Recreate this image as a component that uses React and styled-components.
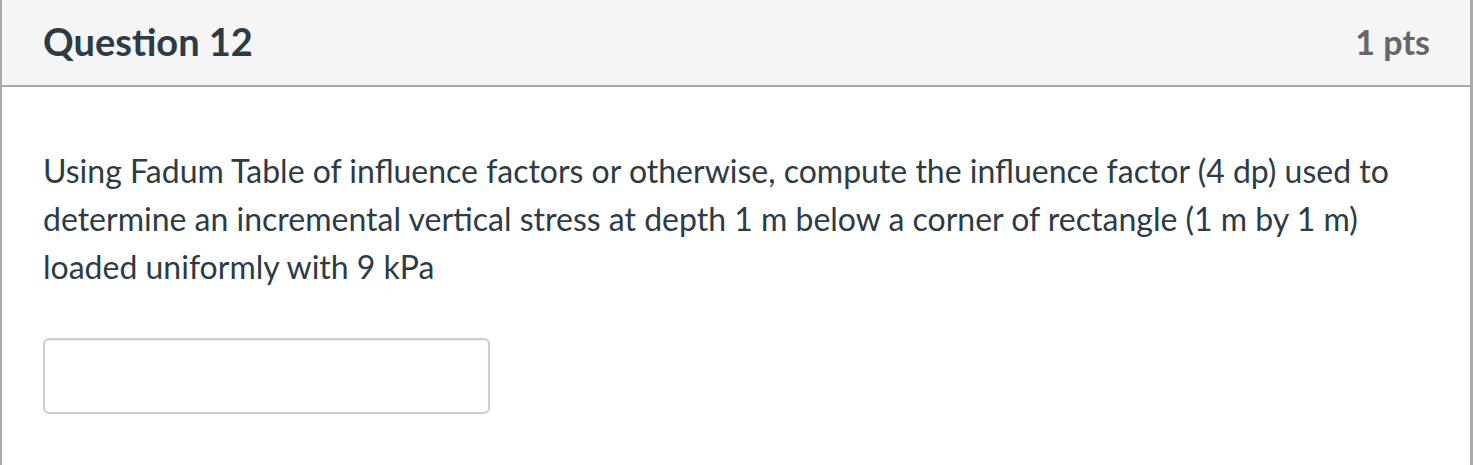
import React from "react";
import styled, { createGlobalStyle } from "styled-components";

const Global = createGlobalStyle`
  html, body { margin: 0; padding: 0; background: #fff; }
  body { font-family: Lato, "Open Sans", sans-serif; }
`;

const Card = styled.div`
  width: 1473px;
  height: 465px;
  box-sizing: border-box;
  border-left: 2px solid #aaaaaa;
  border-right: 3px solid #aaaaaa;
  background: #fff;
  overflow: hidden;
`;

const Header = styled.div`
  display: flex;
  justify-content: space-between;
  align-items: center;
  height: 87px;
  box-sizing: border-box;
  background: #f5f5f5;
  border-bottom: 2px solid #aaaaaa;
  padding: 0 40px 3px 41px;
`;

const Title = styled.h2`
  margin: 0;
  font-size: 38px;
  font-weight: 700;
  color: #2d3b45;
`;

const Points = styled.div`
  font-size: 34px;
  font-weight: 700;
  color: #666666;
`;

const Body = styled.div`
  padding: 60px 41px 0 41px;
`;

const Text = styled.p`
  margin: 0;
  font-size: 32px;
  line-height: 48px;
  color: #2d3b45;
`;

const Answer = styled.input`
  display: block;
  margin-top: 47px;
  width: 447px;
  height: 76px;
  box-sizing: border-box;
  border: 2px solid #cccccc;
  border-radius: 6px;
  background: #fff;
  outline: none;
  box-shadow: inset 0 1px 2px rgba(0, 0, 0, 0.06);
`;

export default function App() {
  return (
    <>
      <Global />
      <Card>
        <Header>
          <Title>Question 12</Title>
          <Points>1 pts</Points>
        </Header>
        <Body>
          <Text>
            Using Fadum Table of influence factors or otherwise, compute the influence factor (4 dp) used to
            determine an incremental vertical stress at depth 1 m below a corner of rectangle (1 m by 1 m)
            loaded uniformly with 9 kPa
          </Text>
          <Answer type="text" aria-label="Answer" />
        </Body>
      </Card>
    </>
  );
}
